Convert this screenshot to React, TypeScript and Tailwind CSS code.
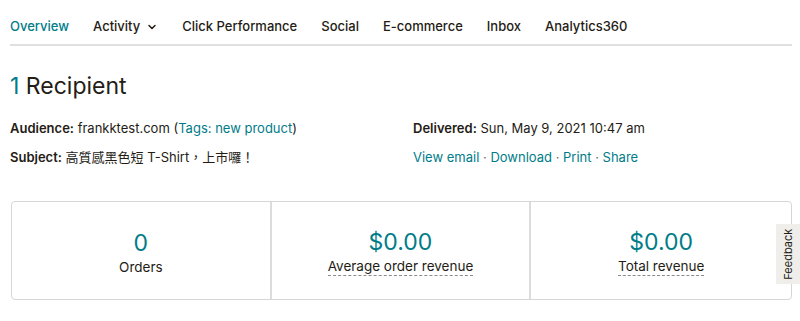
import { ChevronDown } from "lucide-react"

const tabs = ["Overview", "Activity", "Click Performance", "Social", "E-commerce", "Inbox", "Analytics360"]

const stats = [
  { value: "0", label: "Orders", dotted: false },
  { value: "$0.00", label: "Average order revenue", dotted: true },
  { value: "$0.00", label: "Total revenue", dotted: true },
]

export default function App() {
  return (
    <div
      className="relative w-[800px] h-[321px] bg-white text-[#241c15] overflow-hidden"
      style={{ fontFamily: 'Inter, "Noto Sans CJK TC", sans-serif' }}
    >
      <div className="pl-[10px] pr-[8px]">
        <nav className="flex items-center gap-[24px] h-[46px] pt-[9px] border-b-2 border-[#e0e0e0] text-[13px] font-medium">
          {tabs.map((t, i) => (
            <div key={t} className={i === 0 ? "text-[#007c89]" : "flex items-center gap-[6px]"}>
              {t}
              {t === "Activity" && <ChevronDown className="w-[12px] h-[12px]" strokeWidth={3} />}
            </div>
          ))}
        </nav>

        <h1 className="mt-[25px] text-[23px] leading-[30px] font-normal">
          <span className="text-[#007c89]">1</span> Recipient
        </h1>

        <div className="mt-[18px] grid grid-cols-[403px_1fr] gap-y-[11px] text-[13px] leading-[18px]">
          <div>
            <span className="font-semibold">Audience:</span> frankktest.com (
            <span className="text-[#007c89]">Tags: new product</span>)
          </div>
          <div>
            <span className="font-semibold">Delivered:</span> Sun, May 9, 2021 10:47 am
          </div>
          <div>
            <span className="font-semibold">Subject:</span> 高質感黑色短 T-Shirt，上市囉！
          </div>
          <div className="text-[#007c89]">
            View email <span className="text-[#6b6b6b]">·</span> Download <span className="text-[#6b6b6b]">·</span> Print{" "}
            <span className="text-[#6b6b6b]">·</span> Share
          </div>
        </div>

        <div className="mt-[35px] ml-[1px] grid grid-cols-3 h-[99px] border border-[#d6d6d6] rounded-[4px]">
          {stats.map((s, i) => (
            <div
              key={i}
              className={
                i < 2
                  ? "flex flex-col items-center justify-center pt-[3px] border-r-2 border-[#dcdcdc]"
                  : "flex flex-col items-center justify-center pt-[3px]"
              }
            >
              <div className="text-[23px] leading-[28px] text-[#007c89]">{s.value}</div>
              <div
                className={
                  s.dotted
                    ? "mt-[1px] text-[13.5px] leading-[18px] border-b border-dashed border-[#8a8a8a]"
                    : "mt-[1px] text-[13.5px] leading-[18px]"
                }
              >
                {s.label}
              </div>
            </div>
          ))}
        </div>
      </div>

      <div className="absolute right-0 top-[224px] w-[24px] h-[60px] bg-[#efeeea] flex items-center justify-center">
        <span className="block -rotate-90 whitespace-nowrap text-[11px] text-[#241c15]">Feedback</span>
      </div>
    </div>
  )
}
